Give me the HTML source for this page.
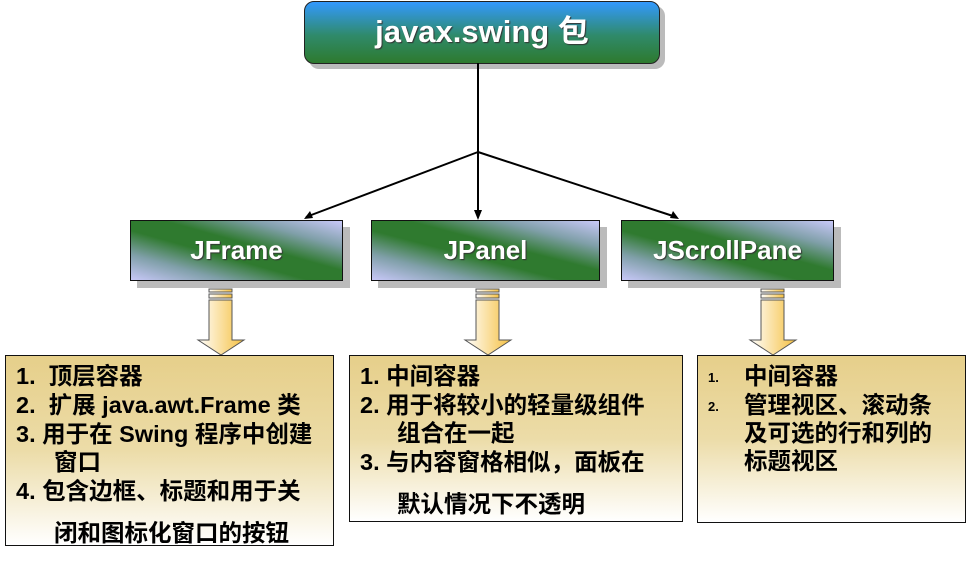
<!DOCTYPE html>
<html><head><meta charset="utf-8"><style>
body{margin:0;width:966px;height:562px;background:#fff;position:relative;overflow:hidden;font-family:"Liberation Sans","Noto Sans CJK SC",sans-serif;font-weight:bold}
.a{position:absolute}
.top{left:304px;top:1px;width:354px;height:61px;border:1px solid #222;border-radius:10px;background:linear-gradient(#3399ff,#2f8a6a 55%,#2e7a2e);box-shadow:5px 5px 0 #bbb;color:#fff;font-size:31px;text-align:center;line-height:60px;text-shadow:1px 1px 1px #333}
.sub{top:220px;height:59px;border:1px solid #111;box-shadow:7px 7px 0 #bbb;color:#fff;font-size:26px;text-align:center;line-height:58px;text-shadow:1px 1px 1px #333;background:linear-gradient(to top right,#c8c8f8 0%,#7f9fa8 22%,#2f7a2f 42%,#2f7a2f 58%,#7f9fa8 78%,#c8c8f8 100%)}
.box{top:355px;border:1px solid #111;background:linear-gradient(#e6cf8a,#ecdca8 50%,#fff 100%);font-size:23.5px;color:#000}
.l{position:absolute;white-space:nowrap;line-height:26px}
</style></head><body>
<div class="a top">javax.swing 包</div>
<svg class="a" style="left:0;top:0" width="966" height="562">
<g stroke="#000" stroke-width="2" fill="none">
<line x1="478" y1="63" x2="478" y2="214"/>
<line x1="478" y1="152" x2="306" y2="217"/>
<line x1="478" y1="152" x2="676" y2="217"/>
</g>
<polygon points="478,220 474,210 482,210" fill="#000"/>
<polygon points="304,219 310,211 313,218" fill="#000"/>
<polygon points="679,219 670,218 673,211" fill="#000"/>
<defs><linearGradient id="g" x1="0" x2="1"><stop offset="0" stop-color="#fff"/><stop offset="1" stop-color="#f5c040"/></linearGradient></defs>
<g stroke="#555" stroke-width="1" fill="url(#g)">
<rect x="209" y="289" width="23" height="3"/><rect x="209" y="294" width="23" height="4"/>
<path d="M209,300 H232 V340 H244 L221,355 L198,340 H209 Z"/>
<rect x="476" y="289" width="23" height="3"/><rect x="476" y="294" width="23" height="4"/>
<path d="M476,300 H499 V340 H511 L488,355 L465,340 H476 Z"/>
<rect x="761" y="289" width="23" height="3"/><rect x="761" y="294" width="23" height="4"/>
<path d="M761,300 H784 V340 H796 L773,355 L750,340 H761 Z"/>
</g>
</svg>
<div class="a sub" style="left:130px;width:211px">JFrame</div>
<div class="a sub" style="left:371px;width:227px">JPanel</div>
<div class="a sub" style="left:621px;width:211px">JScrollPane</div>
<div class="a box" style="left:5px;width:327px;height:189px">
<div class="l" style="left:10px;top:7px">1.&nbsp; 顶层容器</div>
<div class="l" style="left:10px;top:36px">2.&nbsp; 扩展 java.awt.Frame 类</div>
<div class="l" style="left:10px;top:65px">3. 用于在 Swing 程序中创建</div>
<div class="l" style="left:48px;top:93px">窗口</div>
<div class="l" style="left:10px;top:122px">4. 包含边框、标题和用于关</div>
<div class="l" style="left:48px;top:164px">闭和图标化窗口的按钮</div>
</div>
<div class="a box" style="left:349px;width:332px;height:165px">
<div class="l" style="left:10px;top:7px">1. 中间容器</div>
<div class="l" style="left:10px;top:36px">2. 用于将较小的轻量级组件</div>
<div class="l" style="left:47px;top:64px">组合在一起</div>
<div class="l" style="left:10px;top:93px">3. 与内容窗格相似，面板在</div>
<div class="l" style="left:47px;top:135px">默认情况下不透明</div>
</div>
<div class="a box" style="left:697px;width:267px;height:166px">
<div class="l" style="left:10px;top:9px;font-size:13px">1.</div>
<div class="l" style="left:46px;top:7px">中间容器</div>
<div class="l" style="left:10px;top:38px;font-size:13px">2.</div>
<div class="l" style="left:46px;top:36px">管理视区、滚动条</div>
<div class="l" style="left:46px;top:64px">及可选的行和列的</div>
<div class="l" style="left:46px;top:92px">标题视区</div>
</div>
</body></html>
